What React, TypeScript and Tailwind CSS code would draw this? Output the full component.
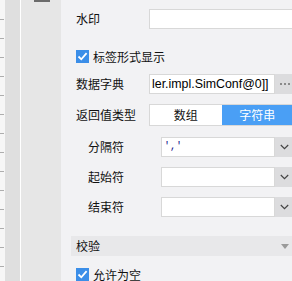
import React from "react";

function Check() {
  return (
    <div className="w-[13px] h-[13px] shrink-0 bg-[#3b8ee8] flex items-center justify-center">
      <svg width="11" height="11" viewBox="0 0 11 11">
        <path d="M1.5 5.5 L4.3 8.3 L9.6 2.2" stroke="white" strokeWidth="1.8" fill="none" />
      </svg>
    </div>
  );
}

function Chevron() {
  return (
    <svg width="9" height="6" viewBox="0 0 9 6">
      <path d="M0.8 1 L4.5 4.6 L8.2 1" stroke="#444" strokeWidth="1.2" fill="none" />
    </svg>
  );
}

function SelectRow({ label, value }: { label: string; value?: string }) {
  return (
    <div className="flex items-center h-[20px] pl-[12px]">
      <div className="w-[73px] shrink-0 text-[12px] leading-none">{label}</div>
      <div className="flex-1 flex h-[20px]">
        <div className="flex-1 bg-white border border-[#d8d8d8] flex items-center pl-[2px]">
          {value ? (
            <span className="font-['Liberation_Mono',monospace] text-[10px] text-[#10108a] leading-none">{value}</span>
          ) : null}
        </div>
        <div className="w-[19px] shrink-0 bg-[#dcdcde] flex items-center justify-center">
          <Chevron />
        </div>
      </div>
    </div>
  );
}

export default function App() {
  const ticks = Array.from({ length: 14 });
  return (
    <div className="w-[292px] h-[281px] overflow-hidden">
      <div className="flex w-[294px] h-[281px] text-[#111] font-['Noto_Sans_CJK_SC','Noto_Sans',sans-serif]">
        <div className="w-[5px] shrink-0 bg-[#f6f6f6] flex flex-col pt-[19px]">
          {ticks.map((_, i) => (
            <div key={i} className="h-[19px] shrink-0 w-[4px] border-t border-[#adadad]" />
          ))}
        </div>
        <div className="w-[15px] shrink-0 bg-[#dfdfdf]" />
        <div className="w-px shrink-0 bg-white" />
        <div className="w-[40px] shrink-0 bg-[#e6e6e6] flex flex-col">
          <div className="ml-[13px] w-[16px] h-[2px] bg-[#6b6b6b]" />
        </div>
        <div className="flex-1 min-w-0 bg-[#f2f2f4] pl-[15px] pt-[9px] flex flex-col">
          <div className="flex items-center h-[20px]">
            <div className="w-[73px] shrink-0 text-[12px] leading-none">水印</div>
            <div className="flex-1 h-[20px] bg-white border border-[#d8d8d8]" />
          </div>

          <div className="flex items-center h-[13px] mt-[21px]">
            <Check />
            <span className="ml-[4px] text-[12px] leading-none whitespace-nowrap">标签形式显示</span>
          </div>

          <div className="flex items-center h-[20px] mt-[11px]">
            <div className="w-[73px] shrink-0 text-[12px] leading-none">数据字典</div>
            <div className="flex-1 flex h-[20px]">
              <div className="flex-1 bg-white border border-[#d8d8d8] flex items-center pl-[2px] overflow-hidden">
                <span className="font-['Liberation_Sans',Arial,sans-serif] text-[12.4px] leading-none whitespace-nowrap text-black">
                  ler.impl.SimConf@0]]
                </span>
              </div>
              <div className="w-[19px] shrink-0 bg-[#dcdcde] flex items-center justify-center gap-[2px]">
                <div className="w-[2px] h-[2px] bg-[#8a8a8a]" />
                <div className="w-[2px] h-[2px] bg-[#8a8a8a]" />
                <div className="w-[2px] h-[2px] bg-[#8a8a8a]" />
              </div>
            </div>
          </div>

          <div className="flex items-center h-[22px] mt-[10px]">
            <div className="w-[73px] shrink-0 text-[12px] leading-none whitespace-nowrap">返回值类型</div>
            <div className="flex-1 flex h-[22px] border border-[#d8d8d8]">
              <div className="flex-1 bg-white flex items-center justify-center text-[12px] leading-none">数组</div>
              <div className="flex-1 bg-[#4a9ff5] flex items-center justify-center text-[12px] leading-none text-white">字符串</div>
            </div>
          </div>

          <div className="mt-[11px]">
            <SelectRow label="分隔符" value="','" />
          </div>
          <div className="mt-[10px]">
            <SelectRow label="起始符" />
          </div>
          <div className="mt-[10px]">
            <SelectRow label="结束符" />
          </div>

          <div className="-ml-[5px] mt-[19px] h-[24px] bg-[#e8e8ea] flex items-center justify-between pl-[5px] pr-[5px]">
            <span className="text-[12px] leading-none">校验</span>
            <svg width="8" height="5" viewBox="0 0 8 5">
              <path d="M0 0 L8 0 L4 5 Z" fill="#9a9a9a" />
            </svg>
          </div>

          <div className="flex items-center h-[13px] mt-[12px]">
            <Check />
            <span className="ml-[4px] text-[12px] leading-none whitespace-nowrap">允许为空</span>
          </div>
        </div>
      </div>
    </div>
  );
}
